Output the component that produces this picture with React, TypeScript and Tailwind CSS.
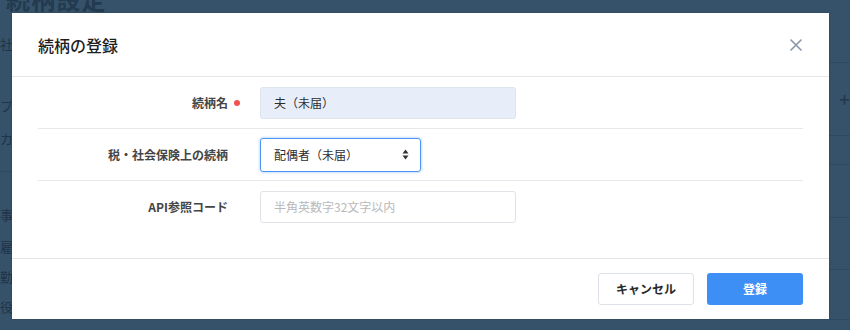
const font = { fontFamily: '"Noto Sans CJK JP", "Noto Sans", sans-serif' };

function SortArrow() {
  return (
    <svg width="7" height="11" viewBox="0 0 7 11" className="shrink-0">
      <path d="M3.5 0.5 L6.5 4.5 H0.5 Z" fill="#333" />
      <path d="M3.5 10.5 L6.5 6.5 H0.5 Z" fill="#333" />
    </svg>
  );
}

function CloseIcon() {
  return (
    <svg width="12" height="12" viewBox="0 0 12 12">
      <path d="M1 1 L11 11 M11 1 L1 11" stroke="#8796a8" strokeWidth="1.6" strokeLinecap="round" />
    </svg>
  );
}

function Backdrop() {
  return (
    <div className="absolute inset-0 flex bg-[#36526a] text-[#1f3446]" style={font}>
      <div className="w-[12px] flex flex-col pt-[37px] text-[13px] leading-none overflow-hidden">
        <div className="h-[64px]">社</div>
        <div className="h-[34px]">プ</div>
        <div className="h-[32px]">カ</div>
        <div className="border-t border-[#2e4a60] h-[38px] mt-[8px]"></div>
        <div className="h-[32px]">事</div>
        <div className="h-[31px]">雇</div>
        <div className="h-[31px]">勤</div>
        <div className="h-[31px]">役</div>
      </div>
      <div className="flex-1 relative">
        <div className="absolute left-[-6px] top-[-19px] text-[24px] font-bold text-[#233a4f] tracking-wider">
          続柄設定
        </div>
      </div>
      <div className="w-[21px] flex flex-col">
        <div className="h-[63px] border-b border-[#2f4a60]"></div>
        <div className="h-[73px] border-b border-[#2f4a60] flex items-center justify-end text-[20px] leading-none text-[#22384b]">
          +
        </div>
        <div className="h-[29px] border-b border-[#2f4a60]"></div>
        <div className="h-[53px] border-b border-[#2f4a60]"></div>
        <div className="h-[52px] border-b border-[#2f4a60]"></div>
        <div className="h-[50px] border-b border-[#2f4a60]"></div>
      </div>
    </div>
  );
}

function Row({
  label,
  required,
  children,
  className,
}: {
  label: string;
  required?: boolean;
  children: React.ReactNode;
  className: string;
}) {
  return (
    <div className={`flex items-center ${className}`}>
      <div className="w-[190px] shrink-0 text-right text-[12px] font-bold text-[#454545] relative">
        {label}
        {required && (
          <span className="absolute right-[-12px] top-1/2 -translate-y-1/2 w-[6px] h-[6px] rounded-full bg-[#f0534f]" />
        )}
      </div>
      <div className="ml-[32px]">{children}</div>
    </div>
  );
}

export default function App() {
  return (
    <div className="relative w-[850px] h-[330px] overflow-hidden" style={font}>
      <Backdrop />
      <div className="absolute left-[12px] top-[13px] w-[817px] h-[306px] bg-white flex flex-col shadow-[0_0_2px_rgba(0,0,0,0.2)]">
        <div className="h-[64px] flex items-center justify-between px-[26px] border-b border-[#e6e6e6] shrink-0">
          <h1 className="text-[16px] font-medium text-[#1e1e1e]">続柄の登録</h1>
          <button className="w-[16px] h-[16px] flex items-center justify-center mr-[-1px]">
            <CloseIcon />
          </button>
        </div>
        <div className="flex-1 px-[26px] pt-[1px]">
          <Row label="続柄名" required className="h-[51px] border-b border-[#e8e8e8]">
            <div className="w-[256px] h-[32px] bg-[#e8eef9] border border-[#dde4ee] rounded-[3px] flex items-center px-[13px] text-[12px] text-[#2e2e2e]">
              夫（未届）
            </div>
          </Row>
          <Row label="税・社会保険上の続柄" className="h-[52px] border-b border-[#e8e8e8]">
            <div className="w-[161px] h-[34px] border border-[#4d95f3] rounded-[3px] shadow-[0_0_3px_rgba(77,149,243,0.6)] flex items-center justify-between pl-[13px] pr-[11px] text-[12px] text-[#2e2e2e]">
              <span>配偶者（未届）</span>
              <SortArrow />
            </div>
          </Row>
          <Row label="API参照コード" className="h-[52px]">
            <div className="w-[256px] h-[32px] border border-[#dfe3e8] rounded-[3px] flex items-center px-[13px] text-[12px] text-[#b9b9b9]">
              半角英数字32文字以内
            </div>
          </Row>
        </div>
        <div className="h-[61px] border-t border-[#e6e6e6] flex items-center justify-end gap-[13px] px-[26px] shrink-0">
          <button className="w-[96px] h-[32px] border border-[#dde2e8] rounded-[3px] bg-white text-[12px] font-bold text-[#2a2a2a]">
            キャンセル
          </button>
          <button className="w-[96px] h-[32px] rounded-[3px] bg-[#3d8ff6] text-[12px] font-bold text-white">
            登録
          </button>
        </div>
      </div>
    </div>
  );
}
